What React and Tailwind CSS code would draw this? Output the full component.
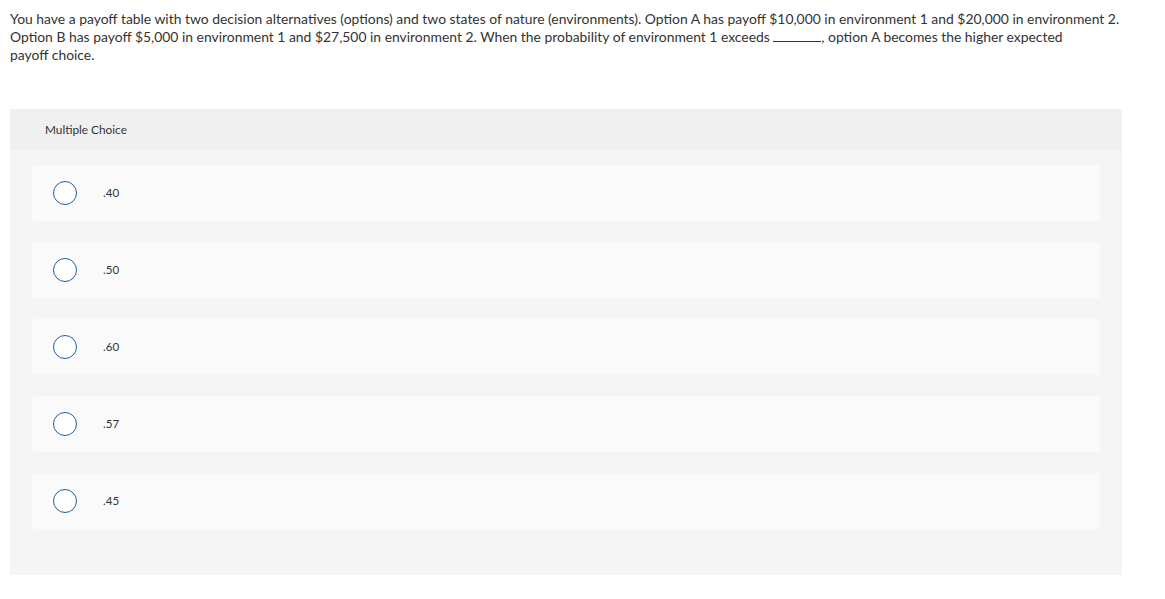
const options = [".40", ".50", ".60", ".57", ".45"];

function Radio() {
  return (
    <span className="block w-6 h-6 rounded-full border-[1.5px] border-[#1d5f9f] bg-white shrink-0" />
  );
}

export default function App() {
  return (
    <div className="min-h-screen bg-white text-[#333] font-['Lato','Liberation_Sans',sans-serif]">
      <div className="px-[10px] pt-[10px]">
        <p className="text-[13.9px] leading-[18px]">
          You have a payoff table with two decision alternatives (options) and two states of nature (environments). Option A has payoff $10,000 in environment 1 and $20,000 in environment 2.
          <br />
          Option B has payoff $5,000 in environment 1 and $27,500 in environment 2. When the probability of environment 1 exceeds{" "}
          <span className="inline-block w-[48px] border-b border-[#333] align-baseline" />, option A becomes the higher expected
          <br />
          payoff choice.
        </p>

        <div className="mt-[45px] w-[1112px] bg-[#f5f5f5]">
          <div className="h-[41px] bg-[#f0f0f0] flex items-center px-[35px] text-[11.8px]">
            Multiple Choice
          </div>
          <div className="px-[22px] pt-[15px] pb-[46px] flex flex-col gap-[21px]">
            {options.map((o) => (
              <div key={o} className="h-[56px] bg-[#fafafa] rounded-[2px] flex items-center pl-[21px]">
                <Radio />
                <span className="ml-[26px] text-[11.5px]">{o}</span>
              </div>
            ))}
          </div>
        </div>
      </div>
    </div>
  );
}
